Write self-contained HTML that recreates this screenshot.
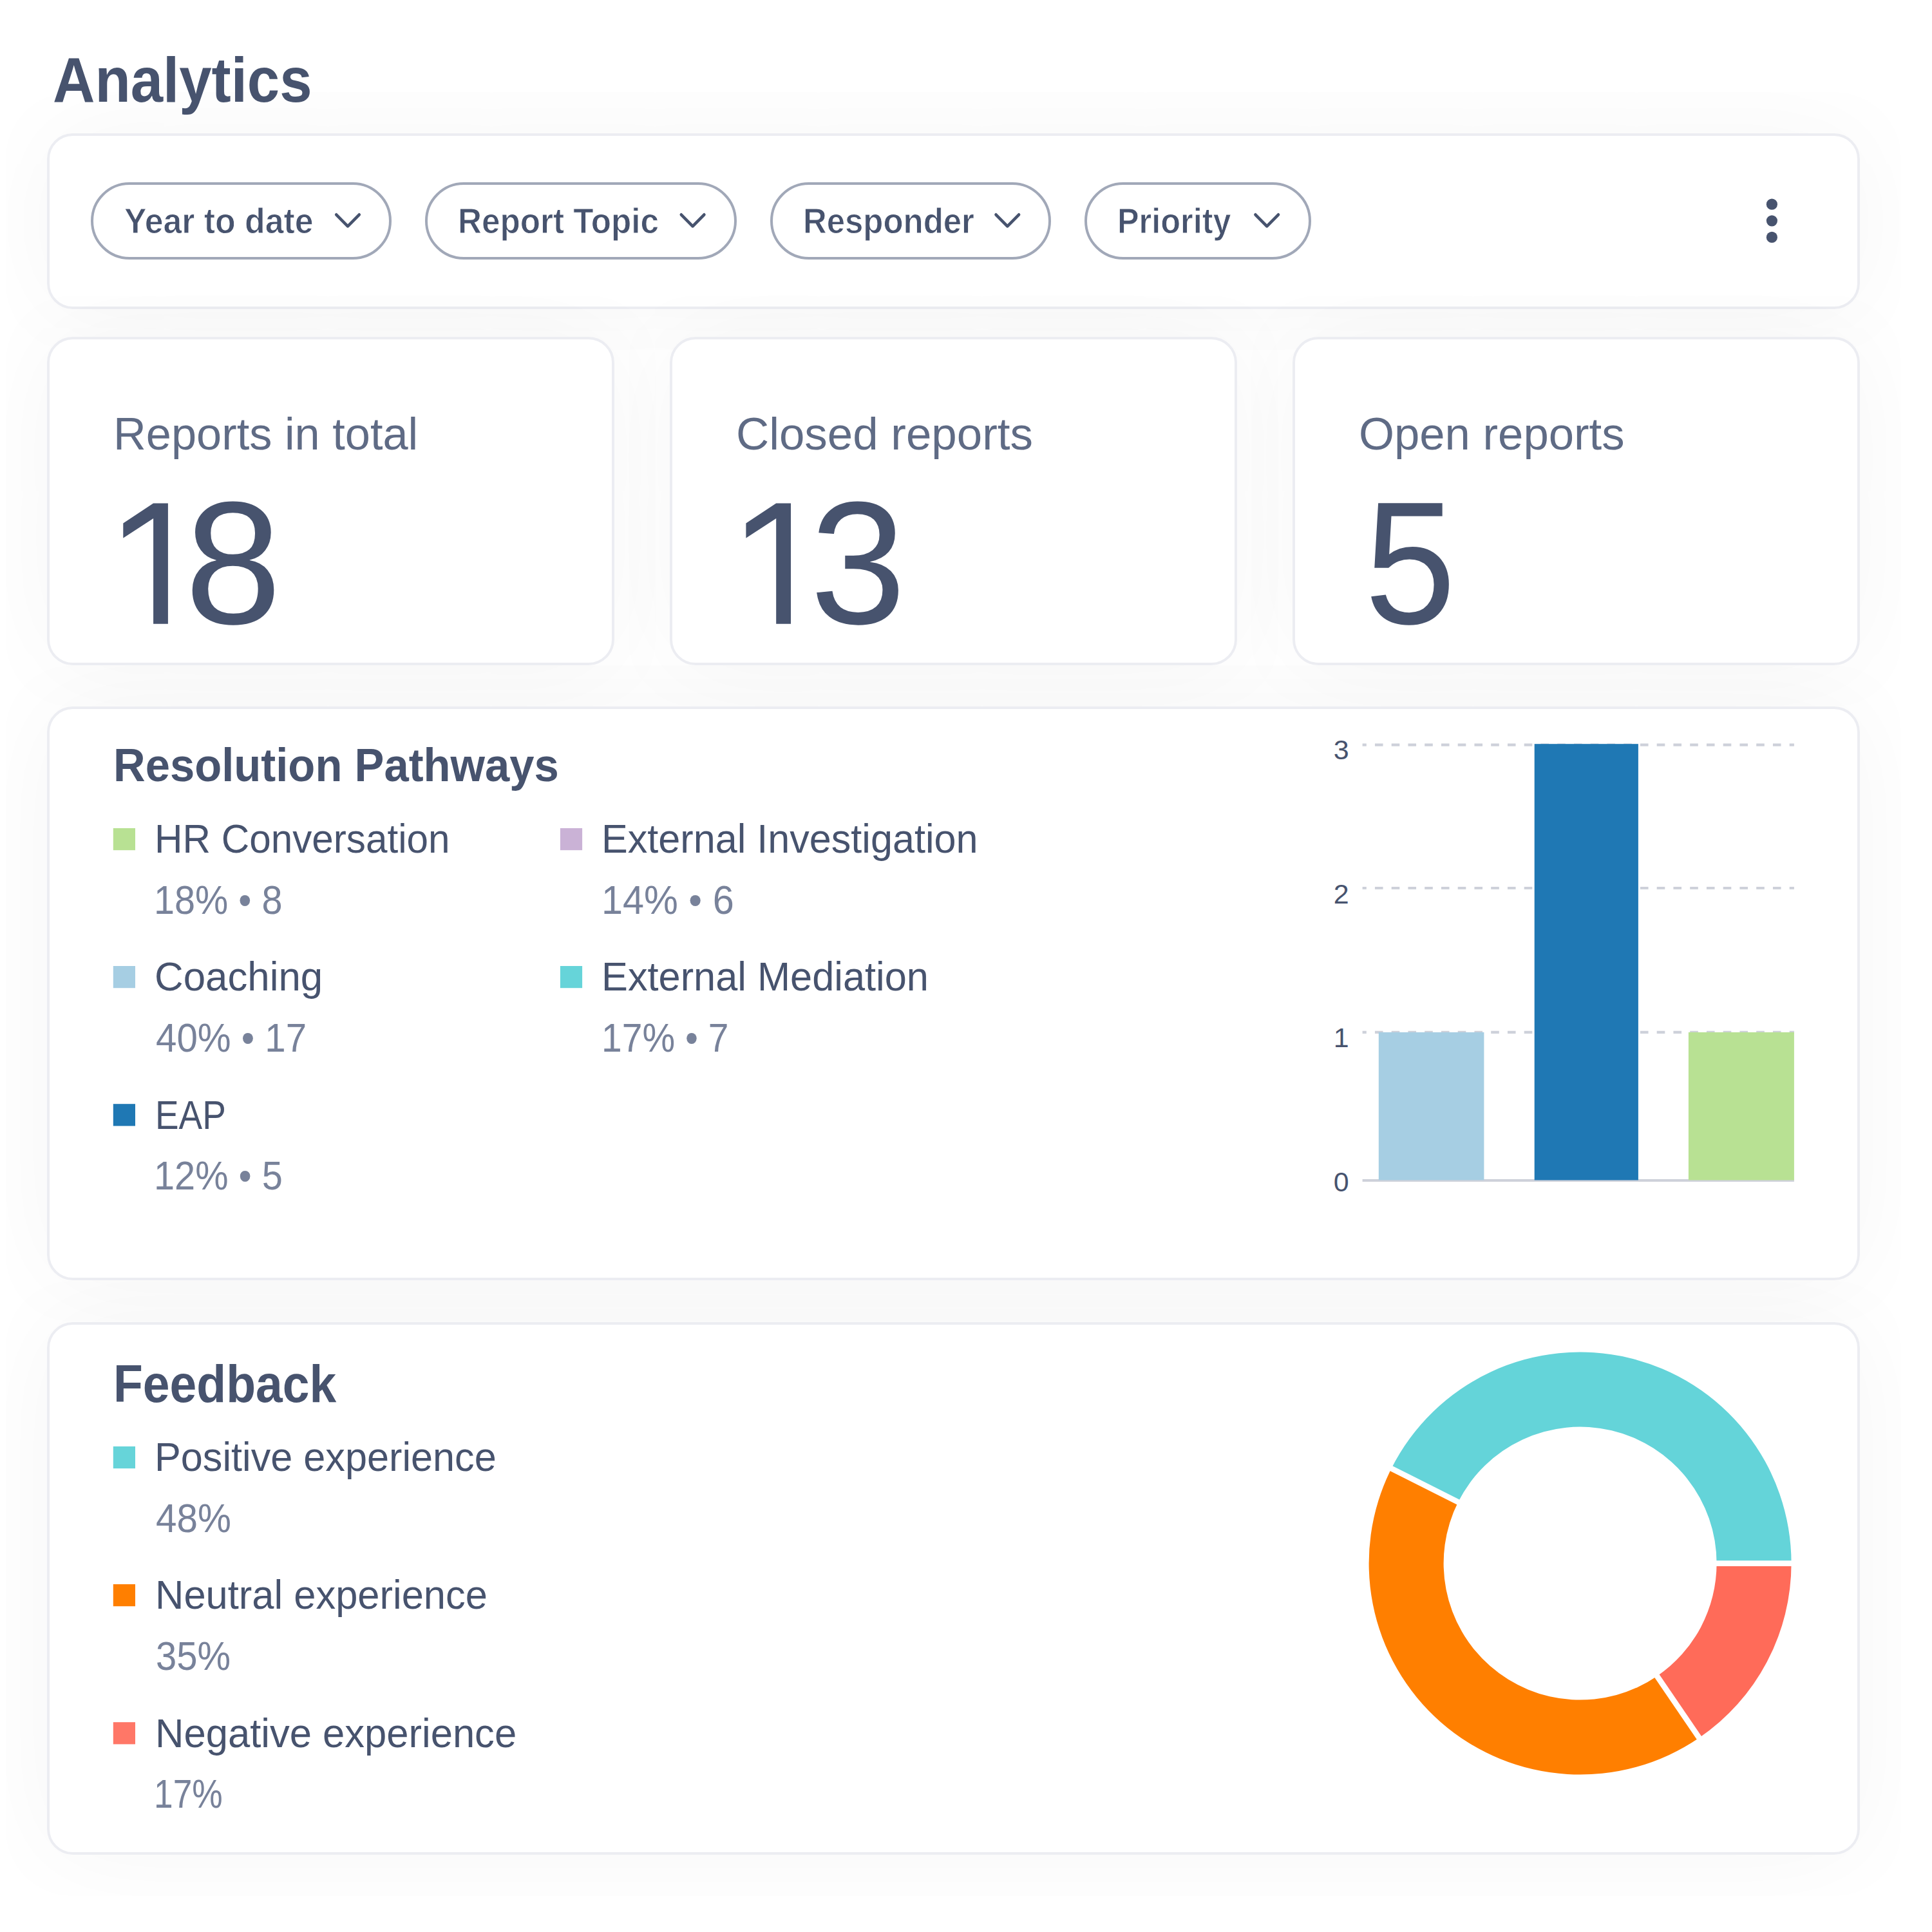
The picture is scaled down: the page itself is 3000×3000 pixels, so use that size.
<!DOCTYPE html>
<html><head><meta charset="utf-8"><title>Analytics</title>
<style>
html,body{margin:0;padding:0;background:#fff}
body{width:3000px;height:3000px;overflow:hidden;font-family:"Liberation Sans",sans-serif}
#page{position:relative;width:3000px;height:3000px;background:#fff;overflow:hidden}
.card{position:absolute;box-sizing:border-box;background:#fff;border:4px solid #ecedf2;border-radius:40px}
.sh{position:absolute;overflow:hidden;border-radius:102px}
.shi{position:absolute;border-radius:40px;box-shadow:0 0 160px rgba(10,10,40,0.04)}
.pill{position:absolute;box-sizing:border-box;border:4.2px solid #a1a8b8;border-radius:60px;background:#fff}
.t{position:absolute;white-space:nowrap;line-height:1em;transform-origin:0 0;font-family:"Liberation Sans",sans-serif}
svg{position:absolute;left:0;top:0}
</style></head><body>
<div id="page">
<div class="sh" style="left:9px;top:142.5px;width:2943px;height:401.5px"><div class="shi" style="left:64px;top:64px;width:2815px;height:273.5px"></div></div>
<div class="card" style="left:73px;top:206.5px;width:2815px;height:273.5px"></div>
<div class="sh" style="left:9px;top:459px;width:1009px;height:638px"><div class="shi" style="left:64px;top:64px;width:881px;height:510px"></div></div>
<div class="card" style="left:73px;top:523px;width:881px;height:510px"></div>
<div class="sh" style="left:976px;top:459px;width:1009px;height:638px"><div class="shi" style="left:64px;top:64px;width:881px;height:510px"></div></div>
<div class="card" style="left:1040px;top:523px;width:881px;height:510px"></div>
<div class="sh" style="left:1943px;top:459px;width:1009px;height:638px"><div class="shi" style="left:64px;top:64px;width:881px;height:510px"></div></div>
<div class="card" style="left:2007px;top:523px;width:881px;height:510px"></div>
<div class="sh" style="left:9px;top:1033px;width:2943px;height:1019px"><div class="shi" style="left:64px;top:64px;width:2815px;height:891px"></div></div>
<div class="card" style="left:73px;top:1097px;width:2815px;height:891px"></div>
<div class="sh" style="left:9px;top:1988.5px;width:2943px;height:955.5px"><div class="shi" style="left:64px;top:64px;width:2815px;height:827.5px"></div></div>
<div class="card" style="left:73px;top:2052.5px;width:2815px;height:827.5px"></div>

<div class="pill" style="left:141.1px;top:283px;width:467.1px;height:120px"></div>
<div class="pill" style="left:660.3px;top:283px;width:483.4px;height:120px"></div>
<div class="pill" style="left:1195.6px;top:283px;width:436.9px;height:120px"></div>
<div class="pill" style="left:1684.4px;top:283px;width:351.4px;height:120px"></div>

<svg width="3000" height="3000" viewBox="0 0 3000 3000">
<path d="M522.2 333.3 L540.0 351.4 L557.8 333.3" fill="none" stroke="#47536e" stroke-width="4.6" stroke-linecap="round" stroke-linejoin="round"/>
<path d="M1057.8 333.3 L1075.6 351.4 L1093.4 333.3" fill="none" stroke="#47536e" stroke-width="4.6" stroke-linecap="round" stroke-linejoin="round"/>
<path d="M1546.5 333.3 L1564.3 351.4 L1582.1 333.3" fill="none" stroke="#47536e" stroke-width="4.6" stroke-linecap="round" stroke-linejoin="round"/>
<path d="M1949.4 333.3 L1967.2 351.4 L1985.0 333.3" fill="none" stroke="#47536e" stroke-width="4.6" stroke-linecap="round" stroke-linejoin="round"/>
<circle cx="2751.4" cy="317.2" r="8.6" fill="#47536e"/>
<circle cx="2751.4" cy="342.8" r="8.6" fill="#47536e"/>
<circle cx="2751.4" cy="368.4" r="8.6" fill="#47536e"/>
<polygon points="238.1,781.4 260.9,781.4 260.9,968.7 238.1,968.7 238.1,804.9 191.3,835.4 191.3,812.5" fill="#47536e"/>
<polygon points="1205.2,781.4 1228.0,781.4 1228.0,968.7 1205.2,968.7 1205.2,804.9 1158.4,835.4 1158.4,812.5" fill="#47536e"/>
<rect x="175.8" y="1286" width="34.2" height="34.2" fill="#b8e193"/>
<rect x="175.8" y="1500" width="34.2" height="34.2" fill="#a6cee3"/>
<rect x="175.8" y="1714.2" width="34.2" height="34.2" fill="#1f78b4"/>
<rect x="869.9" y="1286" width="34.2" height="34.2" fill="#cab2d6"/>
<rect x="869.9" y="1500" width="34.2" height="34.2" fill="#66d4d9"/>
<rect x="175.8" y="2246" width="34.2" height="34.2" fill="#66d4d9"/>
<rect x="175.8" y="2460" width="34.2" height="34.2" fill="#ff7f00"/>
<rect x="175.8" y="2674.2" width="34.2" height="34.2" fill="#ff7767"/>
<line x1="2115.6" x2="2785.9" y1="1156.6" y2="1156.6" stroke="#ced1da" stroke-width="4.2" stroke-dasharray="12.6 13.15" stroke-dashoffset="6.4"/>
<line x1="2115.6" x2="2785.9" y1="1379" y2="1379" stroke="#ced1da" stroke-width="4.2" stroke-dasharray="12.6 13.15" stroke-dashoffset="6.4"/>
<line x1="2115.6" x2="2785.9" y1="1602.9" y2="1602.9" stroke="#ced1da" stroke-width="4.2" stroke-dasharray="12.6 13.15" stroke-dashoffset="6.4"/>
<line x1="2115.6" x2="2785.9" y1="1833" y2="1833" stroke="#ced1da" stroke-width="4.2"/>
<rect x="2140.8" y="1602.9" width="163.6" height="229.6" fill="#a6cee3"/>
<rect x="2382.7" y="1155.2" width="161.2" height="677.3" fill="#1f78b4"/>
<rect x="2621.9" y="1602.9" width="164.0" height="229.6" fill="#b8e193"/>
<text x="2094.6" y="1179" text-anchor="end" font-family="Liberation Sans, sans-serif" font-size="43" fill="#47536e">3</text>
<text x="2094.6" y="1402.6" text-anchor="end" font-family="Liberation Sans, sans-serif" font-size="43" fill="#47536e">2</text>
<text x="2094.6" y="1625.8" text-anchor="end" font-family="Liberation Sans, sans-serif" font-size="43" fill="#47536e">1</text>
<text x="2094.6" y="1850" text-anchor="end" font-family="Liberation Sans, sans-serif" font-size="43" fill="#47536e">0</text>
<path d="M2781.60 2427.60 A328 328 0 0 1 2638.44 2698.56 L2573.07 2602.73 A212 212 0 0 0 2665.60 2427.60 Z" fill="#ff6b59"/>
<path d="M2638.44 2698.56 A328 328 0 0 1 2160.57 2280.22 L2264.21 2332.34 A212 212 0 0 0 2573.07 2602.73 Z" fill="#ff7f00"/>
<path d="M2160.57 2280.22 A328 328 0 0 1 2781.60 2427.60 L2665.60 2427.60 A212 212 0 0 0 2264.21 2332.34 Z" fill="#64d4d9"/>
<line x1="2659.60" y1="2427.60" x2="2787.60" y2="2427.60" stroke="#fff" stroke-width="8.7"/>
<line x1="2569.69" y1="2597.78" x2="2641.82" y2="2703.52" stroke="#fff" stroke-width="8.7"/>
<line x1="2269.57" y1="2335.04" x2="2155.21" y2="2277.53" stroke="#fff" stroke-width="8.7"/>
</svg>
<div class="t" style="left:82.17px;top:74.00px;font-size:98.98px;font-weight:700;color:#47536e;transform:scaleX(0.9147);">Analytics</div>
<div class="t" style="left:192.50px;top:316.00px;font-size:55.23px;font-weight:700;color:#47536e;transform:scaleX(0.9380);-webkit-text-stroke:0.9px #fff;">Year to date</div>
<div class="t" style="left:710.72px;top:316.00px;font-size:55.23px;font-weight:700;color:#47536e;transform:scaleX(0.9276);-webkit-text-stroke:0.9px #fff;">Report Topic</div>
<div class="t" style="left:1246.94px;top:316.00px;font-size:55.23px;font-weight:700;color:#47536e;transform:scaleX(0.9217);-webkit-text-stroke:0.9px #fff;">Responder</div>
<div class="t" style="left:1735.16px;top:316.00px;font-size:55.23px;font-weight:700;color:#47536e;transform:scaleX(0.9129);-webkit-text-stroke:0.9px #fff;">Priority</div>
<div class="t" style="left:176.02px;top:639.00px;font-size:70.64px;font-weight:400;color:#5f6b85;transform:scaleX(0.9963);">Reports in total</div>
<div class="t" style="left:1142.99px;top:639.00px;font-size:70.64px;font-weight:400;color:#5f6b85;transform:scaleX(1.0036);">Closed reports</div>
<div class="t" style="left:2109.80px;top:639.00px;font-size:70.64px;font-weight:400;color:#5f6b85;transform:scaleX(1.0008);">Open reports</div>
<div class="t" style="left:286.57px;top:738.00px;font-size:271.30px;font-weight:400;color:#47536e;transform:scaleX(0.9943);">8</div>
<div class="t" style="left:1257.85px;top:738.00px;font-size:271.30px;font-weight:400;color:#47536e;transform:scaleX(0.9850);">3</div>
<div class="t" style="left:2119.25px;top:738.00px;font-size:271.30px;font-weight:400;color:#47536e;transform:scaleX(0.9379);">5</div>
<div class="t" style="left:175.99px;top:1152.00px;font-size:72.24px;font-weight:700;color:#47536e;transform:scaleX(0.9523);">Resolution Pathways</div>
<div class="t" style="left:239.85px;top:1271.00px;font-size:63.37px;font-weight:400;color:#47536e;transform:scaleX(0.9505);">HR Conversation</div>
<div class="t" style="left:240.47px;top:1485.00px;font-size:63.37px;font-weight:400;color:#47536e;transform:scaleX(0.9757);">Coaching</div>
<div class="t" style="left:241.27px;top:1700.00px;font-size:63.37px;font-weight:400;color:#47536e;transform:scaleX(0.8666);">EAP</div>
<div class="t" style="left:933.98px;top:1271.00px;font-size:63.37px;font-weight:400;color:#47536e;transform:scaleX(0.9648);">External Investigation</div>
<div class="t" style="left:933.96px;top:1485.00px;font-size:63.37px;font-weight:400;color:#47536e;transform:scaleX(0.9678);">External Mediation</div>
<div class="t" style="left:239.77px;top:2231.00px;font-size:63.37px;font-weight:400;color:#47536e;transform:scaleX(0.9659);">Positive experience</div>
<div class="t" style="left:240.75px;top:2445.00px;font-size:63.37px;font-weight:400;color:#47536e;transform:scaleX(0.9701);">Neutral experience</div>
<div class="t" style="left:240.74px;top:2660.00px;font-size:63.37px;font-weight:400;color:#47536e;transform:scaleX(0.9714);">Negative experience</div>
<div class="t" style="left:239.16px;top:1366.00px;font-size:63.37px;font-weight:400;color:#78829a;transform:scaleX(0.9090);">18% • 8</div>
<div class="t" style="left:241.88px;top:1580.00px;font-size:63.37px;font-weight:400;color:#78829a;transform:scaleX(0.9195);">40% • 17</div>
<div class="t" style="left:239.16px;top:1794.00px;font-size:63.37px;font-weight:400;color:#78829a;transform:scaleX(0.9109);">12% • 5</div>
<div class="t" style="left:933.65px;top:1366.00px;font-size:63.37px;font-weight:400;color:#78829a;transform:scaleX(0.9372);">14% • 6</div>
<div class="t" style="left:933.80px;top:1580.00px;font-size:63.37px;font-weight:400;color:#78829a;transform:scaleX(0.8997);">17% • 7</div>
<div class="t" style="left:242.08px;top:2326.00px;font-size:63.37px;font-weight:400;color:#78829a;transform:scaleX(0.9223);">48%</div>
<div class="t" style="left:241.77px;top:2540.00px;font-size:63.37px;font-weight:400;color:#78829a;transform:scaleX(0.9152);">35%</div>
<div class="t" style="left:239.43px;top:2754.00px;font-size:63.37px;font-weight:400;color:#78829a;transform:scaleX(0.8415);">17%</div>
<div class="t" style="left:175.78px;top:2108.00px;font-size:81.25px;font-weight:700;color:#47536e;transform:scaleX(0.9238);">Feedback</div>
</div>
</body></html>
